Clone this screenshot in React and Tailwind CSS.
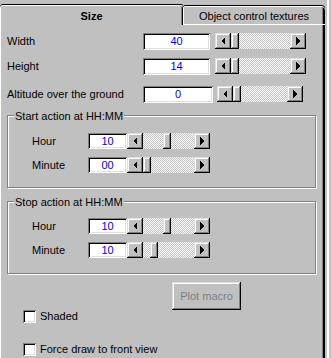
const raised =
  'bg-[#c0c0c0] shadow-[inset_-1px_-1px_#000,inset_1px_1px_#dfdfdf,inset_-2px_-2px_#808080,inset_2px_2px_#fff]'
const sunken =
  'bg-white shadow-[inset_1px_1px_#808080,inset_-1px_-1px_#fff,inset_2px_2px_#000,inset_-2px_-2px_#dfdfdf]'

function Arrow({ dir }) {
  return (
    <div className={`w-[16px] h-[16px] shrink-0 flex items-center justify-center ${raised}`}>
      <svg width="16" height="16" viewBox="0 0 16 16" shapeRendering="crispEdges">
        {dir === 'left' ? (
          <polygon points="10,4 6,8 10,12" fill="#000" />
        ) : (
          <polygon points="6,4 10,8 6,12" fill="#000" />
        )}
      </svg>
    </div>
  )
}

function Scroll({ width, offset }) {
  return (
    <div className={`flex h-[16px] ${width}`}>
      <Arrow dir="left" />
      <div className="flex-1 flex bg-[repeating-conic-gradient(#fff_0_25%,#c0c0c0_0_50%)] bg-[length:2px_2px]">
        <div className={offset} />
        <div className={`w-[8px] h-full ${raised}`} />
      </div>
      <Arrow dir="right" />
    </div>
  )
}

function Field({ value, width, height }) {
  return (
    <div className={`${width} ${height} ${sunken} flex items-center justify-center text-[#0000ff] shrink-0`}>
      {value}
    </div>
  )
}

function TopRow({ label, value, mt, fieldW, gap, scrollW }) {
  return (
    <div className={`flex items-start ${mt}`}>
      <div className="w-[143px] pl-[7px] h-[17px] leading-[17px]">{label}</div>
      <Field value={value} width={fieldW} height="h-[17px]" />
      <div className={gap} />
      <Scroll width={scrollW} offset="w-0" />
    </div>
  )
}

function TimeRow({ label, value, mt, offset }) {
  return (
    <div className={`flex items-start pl-[24px] ${mt}`}>
      <div className="w-[56px] h-[16px] leading-[16px]">{label}</div>
      <Field value={value} width="w-[39px]" height="h-[16px]" />
      <Scroll width="w-[83px]" offset={offset} />
    </div>
  )
}

function Group({ title, mt, rows }) {
  return (
    <div
      className={`ml-[7px] w-[309px] h-[73px] border border-[#808080] shadow-[inset_1px_1px_#fff,1px_1px_#fff] ${mt}`}
    >
      <div className="-mt-[6px] ml-[6px] px-[1px] w-fit bg-[#c0c0c0] leading-[13px] h-[13px]">{title}</div>
      {rows}
    </div>
  )
}

function Check({ label, mt }) {
  return (
    <div className={`flex items-center ml-[23px] ${mt}`}>
      <div className={`w-[13px] h-[13px] ${sunken}`} />
      <span className="ml-[4px] leading-[13px]">{label}</span>
    </div>
  )
}

export default function App() {
  return (
    <div className="w-[331px] h-[358px] bg-[#c0c0c0] flex overflow-hidden font-['Liberation_Sans',Arial,sans-serif] text-[11px] text-black">
      <div className="w-[325px] flex flex-col">
        <div className="h-[25px] flex items-end shrink-0">
          <div className="w-[183px] h-[21px] rounded-tl-[3px] rounded-tr-[2px] flex justify-center pt-[4px] font-bold shadow-[inset_0_1px_#000,inset_1px_0_#fff,inset_0_2px_#fff,inset_-1px_0_#000,inset_-2px_0_#808080]">
            Size
          </div>
          <div className="w-[142px] h-[20px] rounded-tl-[2px] rounded-tr-[4px] flex justify-center pt-[3px] shadow-[inset_0_1px_#000,inset_1px_0_#fff,inset_0_2px_#fff,inset_0_-1px_#fff,inset_-1px_0_#000,inset_-2px_0_#000,inset_-3px_0_#808080]">
            Object control textures
          </div>
        </div>
        <div className="flex-1 flex flex-col shadow-[inset_1px_0_#fff,inset_-1px_0_#000,inset_-2px_0_#000,inset_-3px_0_#808080]">
          <TopRow label="Width" value="40" mt="mt-[8px]" fieldW="w-[67px]" gap="w-[5px]" scrollW="w-[91px]" />
          <TopRow label="Height" value="14" mt="mt-[8px]" fieldW="w-[67px]" gap="w-[5px]" scrollW="w-[91px]" />
          <TopRow label="Altitude over the ground" value="0" mt="mt-[11px]" fieldW="w-[70px]" gap="w-[4px]" scrollW="w-[86px]" />
          <Group
            title="Start action at HH:MM"
            mt="mt-[12px]"
            rows={
              <>
                <TimeRow label="Hour" value="10" mt="mt-[10px]" offset="w-[20px]" />
                <TimeRow label="Minute" value="00" mt="mt-[8px]" offset="w-0" />
              </>
            }
          />
          <Group
            title="Stop action at HH:MM"
            mt="mt-[13px]"
            rows={
              <>
                <TimeRow label="Hour" value="10" mt="mt-[9px]" offset="w-[20px]" />
                <TimeRow label="Minute" value="10" mt="mt-[8px]" offset="w-[7px]" />
              </>
            }
          />
          <div className="ml-[172px] mt-[8px]">
            <div className={`w-[69px] h-[28px] flex items-center justify-center text-[#808080] ${raised}`}>
              Plot macro
            </div>
          </div>
          <Check label="Shaded" mt="mt-0" />
          <Check label="Force draw to front view" mt="mt-[20px]" />
        </div>
      </div>
      <div className="w-[6px] flex pl-[2px]">
        <div className="w-[2px] bg-white" />
      </div>
    </div>
  )
}
